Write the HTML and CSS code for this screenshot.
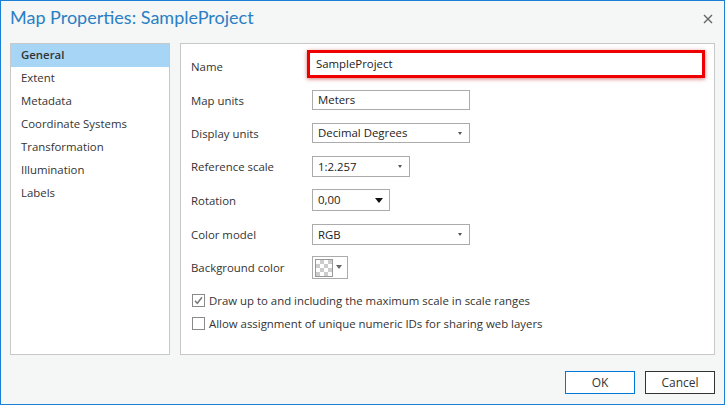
FILE: index.html
```html
<!DOCTYPE html>
<html>
<head lang="en">
    <meta charset="UTF-8">
    <title>Map Properties</title>
    <link rel="stylesheet" href="styles.css">
</head>
<body>
<div class="dialog">
    <header class="dlg-head">
        <h1 class="dlg-title">Map Properties: SampleProject</h1>
        <span class="dlg-close">
            <svg width="10" height="10" viewBox="0 0 10 10"><path d="M1 1L9 9M9 1L1 9" stroke="#666" stroke-width="1.4" fill="none"/></svg>
        </span>
    </header>

    <div class="dlg-body">
        <ul class="nav">
            <li class="nav-item active">General</li>
            <li class="nav-item">Extent</li>
            <li class="nav-item">Metadata</li>
            <li class="nav-item">Coordinate Systems</li>
            <li class="nav-item">Transformation</li>
            <li class="nav-item">Illumination</li>
            <li class="nav-item">Labels</li>
        </ul>

        <section class="panel">
            <div class="row row-name">
                <label class="lbl">Name</label>
                <div class="field field-name">SampleProject</div>
            </div>
            <div class="row">
                <label class="lbl">Map units</label>
                <div class="field w-158">Meters</div>
            </div>
            <div class="row">
                <label class="lbl">Display units</label>
                <div class="field select w-158">Decimal Degrees<i class="caret"></i></div>
            </div>
            <div class="row">
                <label class="lbl">Reference scale</label>
                <div class="field select w-98 h-21">1:2.257<i class="caret"></i></div>
            </div>
            <div class="row row-rot">
                <label class="lbl">Rotation</label>
                <div class="field select w-78 h-22">0,00<i class="caret big"></i></div>
            </div>
            <div class="row row-color">
                <label class="lbl">Color model</label>
                <div class="field select w-158 h-21">RGB<i class="caret"></i></div>
            </div>
            <div class="row">
                <label class="lbl">Background color</label>
                <div class="swatch-btn"><span class="swatch"></span><i class="caret"></i></div>
            </div>
            <div class="checks">
                <label class="check"><span class="box">
                    <svg width="11" height="11" viewBox="0 0 11 11"><path d="M2 5.8L4.3 8.3L9 2.2" stroke="#777" stroke-width="1.4" fill="none"/></svg>
                </span>Draw up to and including the maximum scale in scale ranges</label>
                <label class="check"><span class="box"></span>Allow assignment of unique numeric IDs for sharing web layers</label>
            </div>
        </section>
    </div>

    <footer class="dlg-foot">
        <button class="btn btn-ok">OK</button>
        <button class="btn">Cancel</button>
    </footer>
</div>
</body>
</html>
```

FILE: styles.css
```css
html, body{
    margin: 0;
    padding: 0;
    width: 725px;
    height: 405px;
    overflow: hidden;
    font-family: "Open Sans", "Noto Sans", sans-serif;
    font-size: 11.4px;
    color: #333;
}

.dialog{
    box-sizing: border-box;
    width: 725px;
    height: 405px;
    border: 1px solid #1c7fd6;
    background: #f5f6f6;
    display: flex;
    flex-direction: column;
}

.dlg-head{
    height: 42px;
    display: flex;
    justify-content: space-between;
    align-items: flex-start;
    padding: 0 10px 0 9px;
}

.dlg-title{
    margin: 5px 0 0;
    font-family: Lato, "Open Sans", sans-serif;
    font-size: 18px;
    font-weight: 400;
    color: #2a7fc4;
}

.dlg-close{
    margin-top: 11px;
    margin-right: 1px;
    width: 10px;
    height: 10px;
}

.dlg-body{
    display: flex;
    gap: 10px;
    padding: 0 9px;
    height: 312px;
}

/* left list */
.nav{
    list-style: none;
    margin: 0;
    padding: 0;
    box-sizing: border-box;
    width: 160px;
    height: 100%;
    background: #fff;
    border: 1px solid #c8c8c8;
}

.nav-item{
    height: 23px;
    line-height: 22px;
    padding-left: 10px;
}

.nav-item.active{
    background: #a7d5f5;
    font-weight: 600;
    color: #333;
}

/* right panel */
.panel{
    box-sizing: border-box;
    flex: 1;
    height: 100%;
    background: #fff;
    border: 1px solid #c8c8c8;
    padding: 6px 0 0 10px;
    display: flex;
    flex-direction: column;
    gap: 11px;
}

.row{
    display: flex;
    align-items: center;
    height: 22px;
}

.row-name{
    height: 28px;
}

.row-name .lbl{
    padding-top: 4px;
}

.row-rot{ margin-top: 1px; }
.row-color{ margin-top: 1px; }

.lbl{
    width: 121px;
    flex: none;
}

.field{
    position: relative;
    box-sizing: border-box;
    height: 20px;
    line-height: 18px;
    border: 1px solid #ababab;
    background: #fff;
    padding-left: 5px;
    color: #222;
}

.field-name{
    margin-left: -5px;
    width: 398px;
    height: 28px;
    line-height: 21px;
    border: 3px solid #ee0000;
    padding-left: 6px;
    box-shadow: 0 1px 4px rgba(180, 0, 0, 0.55);
}

.w-158{ width: 158px; }
.w-98{ width: 98px; }
.w-78{ width: 78px; }
.h-21{ height: 21px; line-height: 19px; }
.h-22{ height: 22px; line-height: 20px; }

.caret{
    position: absolute;
    right: 7px;
    top: 50%;
    margin-top: -1px;
    width: 0;
    height: 0;
    border-left: 2.5px solid transparent;
    border-right: 2.5px solid transparent;
    border-top: 3px solid #555;
}

.caret.big{
    right: 6px;
    margin-top: -2px;
    border-left-width: 4px;
    border-right-width: 4px;
    border-top: 5px solid #111;
}

.swatch-btn{
    position: relative;
    box-sizing: border-box;
    width: 36px;
    height: 23px;
    border: 1px solid #ababab;
    background: #fff;
}

.swatch{
    position: absolute;
    left: 2px;
    top: 2px;
    width: 16px;
    height: 16px;
    border: 1px solid #999;
    background-color: #fff;
    background-image:
        linear-gradient(45deg, #ccc 25%, transparent 25%, transparent 75%, #ccc 75%),
        linear-gradient(45deg, #ccc 25%, transparent 25%, transparent 75%, #ccc 75%);
    background-size: 8px 8px;
    background-position: 0 0, 4px 4px;
}

.swatch-btn .caret{
    right: 5px;
    margin-top: -2px;
    border-left-width: 3px;
    border-right-width: 3px;
    border-top: 4px solid #666;
}

.checks{
    display: flex;
    flex-direction: column;
    gap: 1px;
    margin-left: 1px;
}

.check{
    display: flex;
    align-items: center;
    height: 22px;
}

.box{
    box-sizing: border-box;
    width: 13px;
    height: 13px;
    border: 1px solid #8a8a8a;
    background: #fff;
    margin-right: 4px;
    display: flex;
    align-items: center;
    justify-content: center;
}

/* footer */
.dlg-foot{
    display: flex;
    justify-content: flex-end;
    gap: 10px;
    padding: 16px 9px 0 0;
}

.btn{
    box-sizing: border-box;
    width: 70px;
    height: 23px;
    font-family: inherit;
    font-size: 12px;
    color: #333;
    background: #fff;
    border: 1px solid #333;
    padding: 0;
}

.btn-ok{
    border-color: #0078d7;
}
```
